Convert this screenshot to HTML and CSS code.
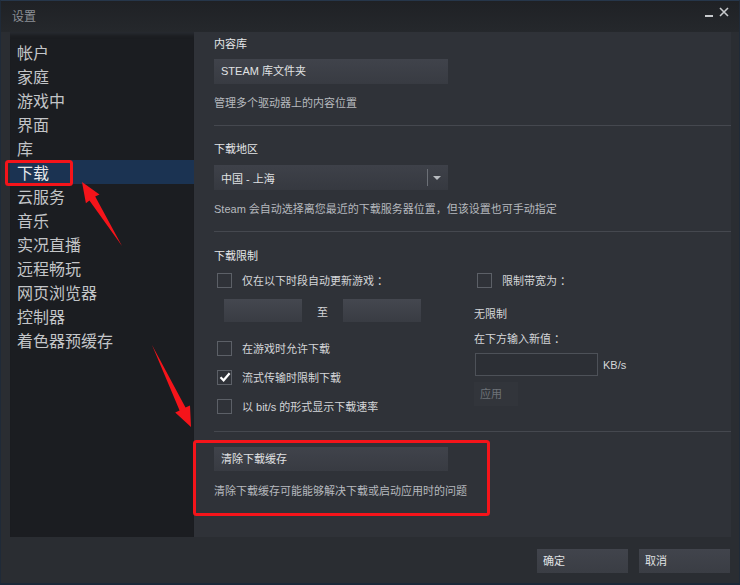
FILE: index.html
```html
<!DOCTYPE html>
<html lang="zh-CN">

<head>
  <meta charset="UTF-8">
  <title>设置</title>
  <link rel="stylesheet" href="styles.css">
</head>

<body>
  <div class="window">
    <header class="titlebar">
      <span class="title">设置</span>
      <div class="win-controls">
        <span class="win-min"></span>
        <svg class="win-close" width="10" height="10" viewBox="0 0 10 10">
          <path d="M1 1 L9 9 M9 1 L1 9" stroke="#c8cacd" stroke-width="1.6" />
        </svg>
      </div>
    </header>

    <div class="main">
      <nav class="nav">
        <div class="nav-item">帐户</div>
        <div class="nav-item">家庭</div>
        <div class="nav-item">游戏中</div>
        <div class="nav-item">界面</div>
        <div class="nav-item">库</div>
        <div class="nav-item active">下载</div>
        <div class="nav-item">云服务</div>
        <div class="nav-item">音乐</div>
        <div class="nav-item">实况直播</div>
        <div class="nav-item">远程畅玩</div>
        <div class="nav-item">网页浏览器</div>
        <div class="nav-item">控制器</div>
        <div class="nav-item">着色器预缓存</div>
      </nav>

      <section class="content">
        <!-- 内容库 -->
        <div class="section first">
          <div class="label">内容库</div>
          <div class="btn wide">STEAM 库文件夹</div>
          <div class="desc">管理多个驱动器上的内容位置</div>
        </div>
        <div class="divider"></div>

        <!-- 下载地区 -->
        <div class="section">
          <div class="label">下载地区</div>
          <div class="select">
            <span class="select-text">中国 - 上海</span>
            <span class="select-sep"></span>
            <span class="select-arrow"></span>
          </div>
          <div class="desc">Steam 会自动选择离您最近的下载服务器位置，但该设置也可手动指定</div>
        </div>
        <div class="divider"></div>

        <!-- 下载限制 -->
        <div class="section limits">
          <div class="label">下载限制</div>
          <div class="limit-cols">
            <div class="col-left">
              <div class="check-row">
                <span class="checkbox"></span>
                <span>仅在以下时段自动更新游戏 ：</span>
              </div>
              <div class="time-row">
                <span class="time-input"></span>
                <span class="time-to">至</span>
                <span class="time-input"></span>
              </div>
              <div class="check-row gap-lg">
                <span class="checkbox"></span>
                <span>在游戏时允许下载</span>
              </div>
              <div class="check-row gap-md">
                <span class="checkbox">
                  <svg width="14" height="14" viewBox="0 0 14 14">
                    <path d="M2.5 7.2 L5.6 10.3 L11.6 3.2" fill="none" stroke="#fff" stroke-width="2.2" />
                  </svg>
                </span>
                <span>流式传输时限制下载</span>
              </div>
              <div class="check-row gap-md">
                <span class="checkbox"></span>
                <span>以 bit/s 的形式显示下载速率</span>
              </div>
            </div>

            <div class="col-right">
              <div class="check-row">
                <span class="checkbox"></span>
                <span>限制带宽为 ：</span>
              </div>
              <div class="plain unlimited">无限制</div>
              <div class="plain new-value">在下方输入新值 ：</div>
              <div class="rate-row">
                <span class="rate-input"></span>
                <span class="rate-unit">KB/s</span>
              </div>
              <div class="btn apply">应用</div>
            </div>
          </div>
        </div>
        <div class="divider"></div>

        <!-- 清除下载缓存 -->
        <div class="section cache">
          <div class="btn wide">清除下载缓存</div>
          <div class="desc">清除下载缓存可能能够解决下载或启动应用时的问题</div>
        </div>
      </section>
    </div>

    <footer class="footer">
      <div class="btn footer-btn">确定</div>
      <div class="btn footer-btn">取消</div>
    </footer>

    <!-- 标注 -->
    <svg class="marks" width="740" height="585" viewBox="0 0 740 585">
      <rect x="6.5" y="161.5" width="65" height="23" rx="2" fill="none" stroke="#f5141a" stroke-width="3" />
      <rect x="194.5" y="441.5" width="294" height="73" rx="2" fill="none" stroke="#f5141a" stroke-width="3" />
      <polygon points="82,182 99.5,194.6 95.2,196.6 122,246 89.4,200.6 85.9,203.2" fill="#f5141a" />
      <polygon points="152,345 185.5,407.5 190,405.6 191,427 175.2,412.4 179.6,410.5" fill="#f5141a" />
    </svg>
  </div>
</body>

</html>
```

FILE: styles.css
```css
body {
  margin: 0;
  font-family: "Liberation Sans", "Noto Sans CJK SC", sans-serif;
  background: #2a2d32;
}

.window {
  position: relative;
  width: 740px;
  height: 585px;
  box-sizing: border-box;
  background: #2a2d32;
  border-top: 1px solid #26364a;
  border-left: 1px solid #1f2a38;
  border-right: 1px solid #1f2a38;
  border-bottom: 2px solid #1b2838;
  overflow: hidden;
}

.titlebar {
  height: 31px;
  display: flex;
  align-items: center;
  justify-content: space-between;
  padding: 0 10px 0 11px;
  background: linear-gradient(#1f2125, #25282c);
}

.title {
  font-size: 12px;
  color: #8c9096;
  margin-top: -3px;
}

.win-controls {
  display: flex;
  align-items: flex-start;
  gap: 6px;
  margin-top: -9px;
}

.win-min {
  width: 8px;
  height: 2px;
  margin-top: 8px;
  background: #c8cacd;
}

.main {
  display: flex;
  height: 505px;
  padding: 0 8px 0 9px;
}

.nav {
  width: 184px;
  background: #1b1d21;
  padding-top: 8px;
  box-sizing: border-box;
  box-shadow: inset 0 6px 4px -4px #2a2d33;
}

.nav-item {
  height: 22px;
  line-height: 24px;
  padding: 2px 0 0 7px;
  font-size: 16px;
  color: #c3c5c8;
}

.nav-item.active {
  background: #1b3352;
  color: #e6e8ea;
}

.content {
  flex: 1;
  background: #2f3238;
  padding-left: 20px;
  font-size: 11px;
  color: #dcdee0;
}

.section {
  padding-top: 14px;
  padding-bottom: 15px;
}

.section.first {
  padding-top: 3px;
}

.label {
  height: 15px;
  line-height: 16px;
  padding-top: 1px;
  font-size: 11px;
  color: #e4e6e8;
  margin-bottom: 9px;
}

.section.first .label {
  margin-bottom: 8px;
}

.desc {
  height: 15px;
  line-height: 16px;
  padding-top: 1px;
  margin-top: 10px;
  color: #b6b9be;
}

.divider {
  height: 1px;
  background: #45484f;
}

.btn {
  box-sizing: border-box;
  height: 25px;
  line-height: 25px;
  padding-left: 7px;
  font-size: 11px;
  color: #e0e2e4;
  background: linear-gradient(#40434b, #383b42);
}

.btn.wide {
  width: 234px;
}

.select {
  position: relative;
  width: 234px;
  height: 25px;
  display: flex;
  align-items: center;
  background: linear-gradient(#3e4149, #363940);
}

.select-text {
  flex: 1;
  padding: 1px 0 0 7px;
  color: #e0e2e4;
}

.select-sep {
  width: 1px;
  height: 17px;
  background: #6c7077;
}

.select-arrow {
  width: 0;
  height: 0;
  margin: 0 7px 0 5px;
  border-left: 4px solid transparent;
  border-right: 4px solid transparent;
  border-top: 4px solid #b8bbc0;
}

/* 下载限制 */
.section.limits {
  padding-top: 15px;
  padding-bottom: 18px;
}

.limits .label {
  margin-bottom: 10px;
}

.limit-cols {
  display: flex;
}

.col-left {
  width: 260px;
}

.col-right {
  flex: 1;
}

.check-row {
  display: flex;
  align-items: center;
  height: 14px;
  gap: 10px;
  padding-left: 3px;
  color: #d4d6d9;
}

.check-row.gap-lg {
  margin-top: 19px;
}

.check-row.gap-md {
  margin-top: 15px;
}

.checkbox {
  box-sizing: border-box;
  width: 15px;
  height: 15px;
  border: 1px solid #5c6067;
  display: flex;
  align-items: center;
  justify-content: center;
}

.checkbox svg {
  flex: none;
}

.time-row {
  display: flex;
  align-items: center;
  margin-top: 12px;
  padding-left: 10px;
  height: 23px;
}

.time-input {
  width: 78px;
  height: 23px;
  background: linear-gradient(#44474f, #393c43);
}

.time-to {
  width: 41px;
  text-align: center;
  color: #d4d6d9;
}

.plain {
  height: 16px;
  line-height: 16px;
  color: #d4d6d9;
}

.unlimited {
  margin-top: 19px;
}

.new-value {
  margin-top: 9px;
}

.rate-row {
  display: flex;
  align-items: center;
  margin-top: 6px;
  padding-left: 1px;
}

.rate-input {
  box-sizing: border-box;
  width: 123px;
  height: 23px;
  border: 1px solid #4d5158;
  background: #2c2f35;
}

.rate-unit {
  margin-left: 5px;
  color: #d4d6d9;
}

.btn.apply {
  width: 44px;
  height: 24px;
  line-height: 24px;
  margin-top: 6px;
  padding-left: 6px;
  color: #6e7278;
  background: #32353b;
}

/* 清除下载缓存 */
.section.cache {
  padding-top: 15px;
}

.cache .btn {
  height: 24px;
  line-height: 25px;
}

.cache .desc {
  margin-top: 11px;
}

.footer {
  display: flex;
  justify-content: flex-end;
  gap: 11px;
  padding: 12px 9px 0 0;
}

.btn.footer-btn {
  width: 91px;
  height: 24px;
  line-height: 25px;
  padding-left: 6px;
  background: linear-gradient(#41444c, #3a3d44);
}

.marks {
  position: absolute;
  top: -1px;
  left: -1px;
  pointer-events: none;
}
```
